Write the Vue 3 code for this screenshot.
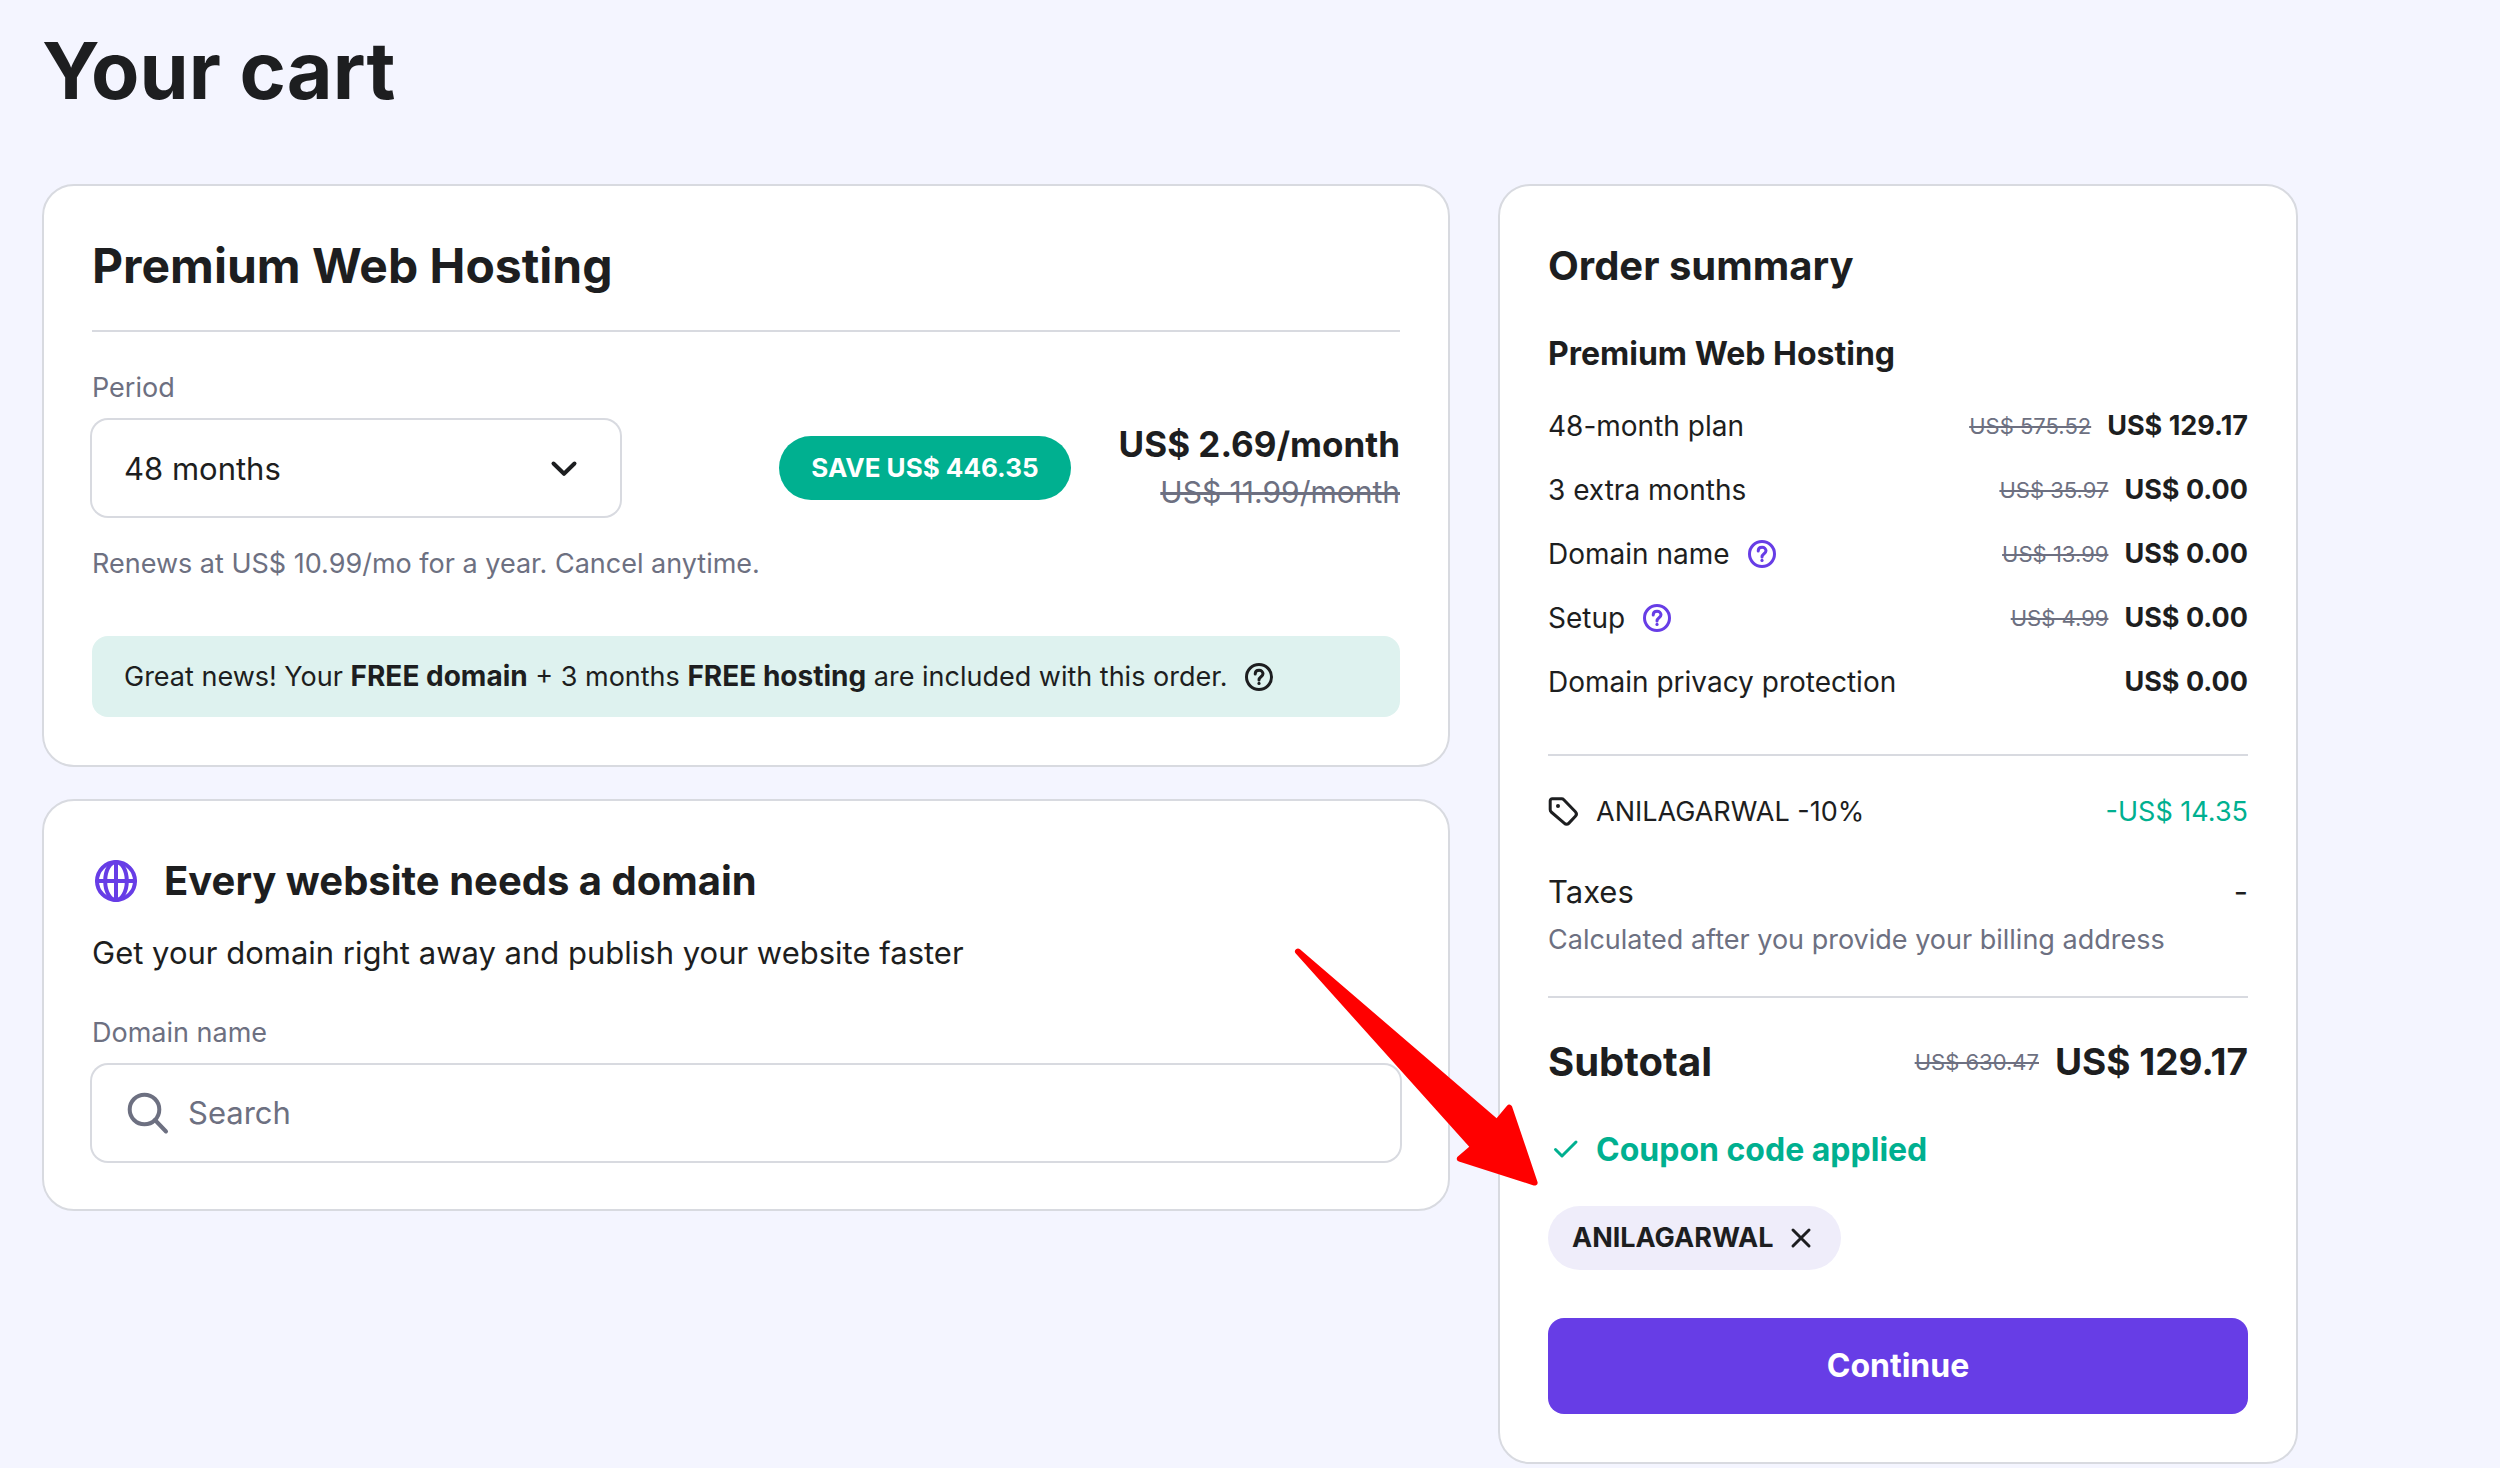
<script setup>
import { ref } from 'vue'

const period = ref('48')
const domain = ref('')

const items = [
  { label: '48-month plan', was: 'US$ 575.52', now: 'US$ 129.17' },
  { label: '3 extra months', was: 'US$ 35.97', now: 'US$ 0.00' },
  { label: 'Domain name', help: true, was: 'US$ 13.99', now: 'US$ 0.00' },
  { label: 'Setup', help: true, was: 'US$ 4.99', now: 'US$ 0.00' },
  { label: 'Domain privacy protection', now: 'US$ 0.00' },
]
</script>

<template>
  <main class="page">
    <h1>Your cart</h1>
    <div class="columns">
      <div class="stack">
        <section class="card">
          <h2 class="plan-title">Premium Web Hosting</h2>
          <hr />
          <label class="field-label" for="period">Period</label>
          <div class="plan-row">
            <div class="select-wrap">
              <select id="period" v-model="period" class="control">
                <option value="48">48 months</option>
                <option value="24">24 months</option>
                <option value="12">12 months</option>
                <option value="1">1 month</option>
              </select>
              <svg class="chevron" viewBox="0 0 32 32" aria-hidden="true">
                <path d="M5.5 11.500L16 21.800L26.500 11.500" />
              </svg>
            </div>
            <div class="offer">
              <span class="badge">SAVE US$ 446.35</span>
              <div class="price">
                <strong>US$ 2.69/month</strong>
                <s>US$ 11.99/month</s>
              </div>
            </div>
          </div>
          <p class="renewal">Renews at US$ 10.99/mo for a year. Cancel anytime.</p>
          <div class="notice">
            <span>Great news! Your <b>FREE domain</b> + 3 months <b>FREE hosting</b> are included with this order.</span>
            <svg class="icon" viewBox="0 0 32 32" aria-hidden="true">
              <circle cx="16" cy="16" r="12.5" />
              <path d="M12.2 13C12.2 10.700 13.9 9.300 16.1 9.300C18.3 9.300 20 10.700 20 12.800C20 15.600 16 15.900 16 18.900" />
              <circle class="dot" cx="16" cy="22.400" r="1.600" />
            </svg>
          </div>
        </section>

        <section class="card">
          <div class="domain-head">
            <svg class="globe" viewBox="0 0 48 48" aria-hidden="true">
              <circle cx="24" cy="24" r="19" />
              <ellipse cx="24" cy="24" rx="10.800" ry="19" />
              <path d="M24 5V43M5 24H43" />
            </svg>
            <h2 class="section-title">Every website needs a domain</h2>
          </div>
          <p class="lead">Get your domain right away and publish your website faster</p>
          <label class="field-label" for="domain">Domain name</label>
          <div class="control search">
            <svg viewBox="0 0 48 48" aria-hidden="true">
              <circle cx="20.500" cy="20.500" r="14.800" />
              <path d="M31 31L42 42.500" />
            </svg>
            <input id="domain" v-model="domain" type="text" placeholder="Search" />
          </div>
        </section>
      </div>

      <aside class="card summary">
        <h2 class="section-title">Order summary</h2>
        <h3>Premium Web Hosting</h3>
        <table>
          <tbody>
            <tr v-for="item in items" :key="item.label">
              <th scope="row">
                <span class="item-label">
                  {{ item.label }}
                  <button v-if="item.help" type="button" class="help" :aria-label="'About ' + item.label">
                    <svg class="icon" viewBox="0 0 32 32" aria-hidden="true">
                      <circle cx="16" cy="16" r="12.500" />
                      <path d="M12.2 13C12.2 10.700 13.9 9.300 16.1 9.300C18.3 9.300 20 10.700 20 12.800C20 15.600 16 15.900 16 18.900" />
                      <circle class="dot" cx="16" cy="22.400" r="1.600" />
                    </svg>
                  </button>
                </span>
              </th>
              <td>
                <span class="amounts">
                  <s v-if="item.was">{{ item.was }}</s>
                  <strong>{{ item.now }}</strong>
                </span>
              </td>
            </tr>
          </tbody>
        </table>
        <hr class="after-items" />
        <div class="line discount">
          <span class="with-icon">
            <svg class="icon" viewBox="0 0 32 32" aria-hidden="true">
              <path d="M2.200 4.800a2 2 0 0 1 2-2h9.500a3 3 0 0 1 2.100.9l11.600 12a3.400 3.400 0 0 1 0 4.600l-6.700 7.100a2.900 2.900 0 0 1-4.200 0L3.200 16a3.400 3.400 0 0 1-1-2.400z" />
              <circle class="dot" cx="10" cy="10" r="2" />
            </svg>
            ANILAGARWAL -10%
          </span>
          <span class="saving">-US$ 14.35</span>
        </div>
        <div class="line taxes">
          <span>Taxes</span>
          <span>-</span>
        </div>
        <p class="hint">Calculated after you provide your billing address</p>
        <hr />
        <div class="line subtotal">
          <h2 class="section-title">Subtotal</h2>
          <span class="amounts">
            <s>US$ 630.47</s>
            <strong>US$ 129.17</strong>
          </span>
        </div>
        <p class="applied">
          <svg class="icon" viewBox="0 0 32 32" aria-hidden="true">
            <path d="M7.500 15.500L14 22L28 8" />
          </svg>
          Coupon code applied
        </p>
        <div class="chip">
          ANILAGARWAL
          <button type="button" aria-label="Remove coupon">
            <svg viewBox="0 0 24 24" aria-hidden="true">
              <path d="M4 4L20 20M20 4L4 20" />
            </svg>
          </button>
        </div>
        <button type="button" class="continue">Continue</button>

        <svg class="pointer" viewBox="0 0 246 240" aria-hidden="true">
          <path d="M4 3.500L203 174.500L215.300 159.700L240.600 234.600L165.800 210.700L179.500 199Z" />
        </svg>
      </aside>
    </div>
  </main>
</template>

<style>
body {
  background: #f4f5ff;
}
</style>

<style scoped>
.page {
  box-sizing: border-box;
  padding: 20px 202px 4px 42px;
  color: #1d1e20;
  font-family: "Inter", "Liberation Sans", sans-serif;
  font-size: 27px;
  line-height: 48px;
}

h1,
h2,
h3,
p {
  margin: 0;
  font-weight: 700;
}

h1 {
  margin-bottom: 64px;
  font-size: 79px;
  line-height: 100px;
}

h3 {
  margin: 32px 0 16px;
  font-size: 32px;
}

p {
  font-weight: 400;
}

hr {
  height: 2px;
  margin: 32px 0;
  border: 0;
  background: #d8dae0;
}

svg {
  display: block;
  flex: none;
  fill: none;
  stroke: currentColor;
  stroke-linecap: round;
  stroke-linejoin: round;
}

button {
  padding: 0;
  border: 0;
  background: none;
  color: inherit;
  font: inherit;
  cursor: pointer;
}

.icon {
  width: 32px;
  height: 32px;
  stroke-width: 3;
}

.dot {
  fill: currentColor;
  stroke: none;
}

.columns {
  display: grid;
  grid-template-columns: 1408fr 800fr;
  align-items: start;
  gap: 48px;
}

.stack {
  display: flex;
  flex-direction: column;
  gap: 32px;
}

.card {
  padding: 48px;
  border: 2px solid #d8dae0;
  border-radius: 32px;
  background: #ffffff;
}

.plan-title {
  font-size: 48px;
  line-height: 64px;
}

.section-title {
  font-size: 40px;
  line-height: 64px;
}

.field-label {
  display: block;
  margin-bottom: 8px;
  color: #6d7081;
}

.control {
  box-sizing: border-box;
  width: 100%;
  height: 96px;
  border: 0;
  border-radius: 16px;
  background: #ffffff;
  box-shadow: 0 0 0 2px #d8dae0;
  color: #1d1e20;
  font-family: inherit;
  font-size: 31px;
}

.plan-row {
  display: flex;
  align-items: center;
  justify-content: space-between;
}

.select-wrap {
  position: relative;
  width: 528px;
}

select.control {
  display: block;
  padding: 0 80px 0 32px;
  appearance: none;
}

.chevron {
  position: absolute;
  top: 32px;
  right: 40px;
  width: 32px;
  height: 32px;
  stroke-width: 4;
  pointer-events: none;
}

.offer {
  display: flex;
  align-items: center;
  gap: 48px;
}

.badge {
  padding: 0 32px;
  border-radius: 32px;
  background: #00b090;
  color: #ffffff;
  font-size: 26px;
  font-weight: 700;
  line-height: 64px;
}

.price {
  display: flex;
  flex-direction: column;
  align-items: flex-end;
}

.price strong {
  font-size: 35px;
}

s {
  color: #6d7081;
  text-decoration-thickness: 2px;
}

.price s {
  font-size: 30px;
  text-decoration-thickness: 3px;
}

.renewal {
  margin: 24px 0 48px;
  color: #6d7081;
}

.notice {
  display: flex;
  align-items: center;
  gap: 16px;
  padding: 16px 32px;
  border-radius: 16px;
  background: #def2ef;
}

.notice b {
  font-size: 28px;
}

.domain-head {
  display: flex;
  align-items: center;
  gap: 24px;
}

.globe {
  width: 48px;
  height: 48px;
  color: #673de6;
  stroke-width: 4;
}

.lead {
  margin: 16px 0 32px;
  font-size: 31px;
}

.search {
  display: flex;
  align-items: center;
  gap: 16px;
  padding: 0 32px;
}

.search svg {
  width: 48px;
  height: 48px;
  color: #6d7081;
  stroke-width: 4;
}

.search input {
  flex: 1;
  min-width: 0;
  padding: 0;
  border: 0;
  outline: 0;
  background: none;
  color: inherit;
  font: inherit;
}

.search input::placeholder {
  color: #6d7081;
  opacity: 1;
}

.summary {
  position: relative;
}

table {
  width: 100%;
  border-collapse: collapse;
}

th,
td {
  height: 64px;
  padding: 0;
}

th {
  font-size: 28px;
  font-weight: 400;
  text-align: left;
}

.item-label,
.with-icon,
.applied {
  display: flex;
  align-items: center;
  gap: 16px;
}

.help {
  color: #673de6;
}

.amounts {
  display: flex;
  align-items: center;
  justify-content: flex-end;
  gap: 16px;
}

.amounts s {
  font-size: 22px;
}

.amounts strong {
  font-size: 27px;
}

.after-items {
  margin-top: 40px;
}

.line {
  display: flex;
  align-items: center;
  justify-content: space-between;
}

.discount {
  margin-bottom: 32px;
}

.saving {
  color: #00b090;
}

.taxes {
  font-size: 31px;
}

.hint {
  color: #6d7081;
}

.subtotal strong {
  font-size: 37px;
}

.applied {
  margin: 32px 0;
  color: #00b090;
  font-size: 32px;
  font-weight: 700;
}

.chip {
  display: inline-flex;
  align-items: center;
  gap: 16px;
  height: 64px;
  margin-bottom: 48px;
  padding: 0 28px 0 24px;
  border-radius: 32px;
  background: #efedfa;
  font-weight: 700;
  vertical-align: top;
}

.chip svg {
  width: 24px;
  height: 24px;
  stroke-width: 3;
}

.continue {
  display: block;
  width: 100%;
  height: 96px;
  border-radius: 16px;
  background: #673de6;
  color: #ffffff;
  font-size: 32px;
  font-weight: 700;
}

.pointer {
  position: absolute;
  top: 762px;
  left: -206px;
  width: 246px;
  height: 240px;
  fill: #ff0000;
  stroke: #ff0000;
  stroke-width: 6;
  pointer-events: none;
}
</style>
